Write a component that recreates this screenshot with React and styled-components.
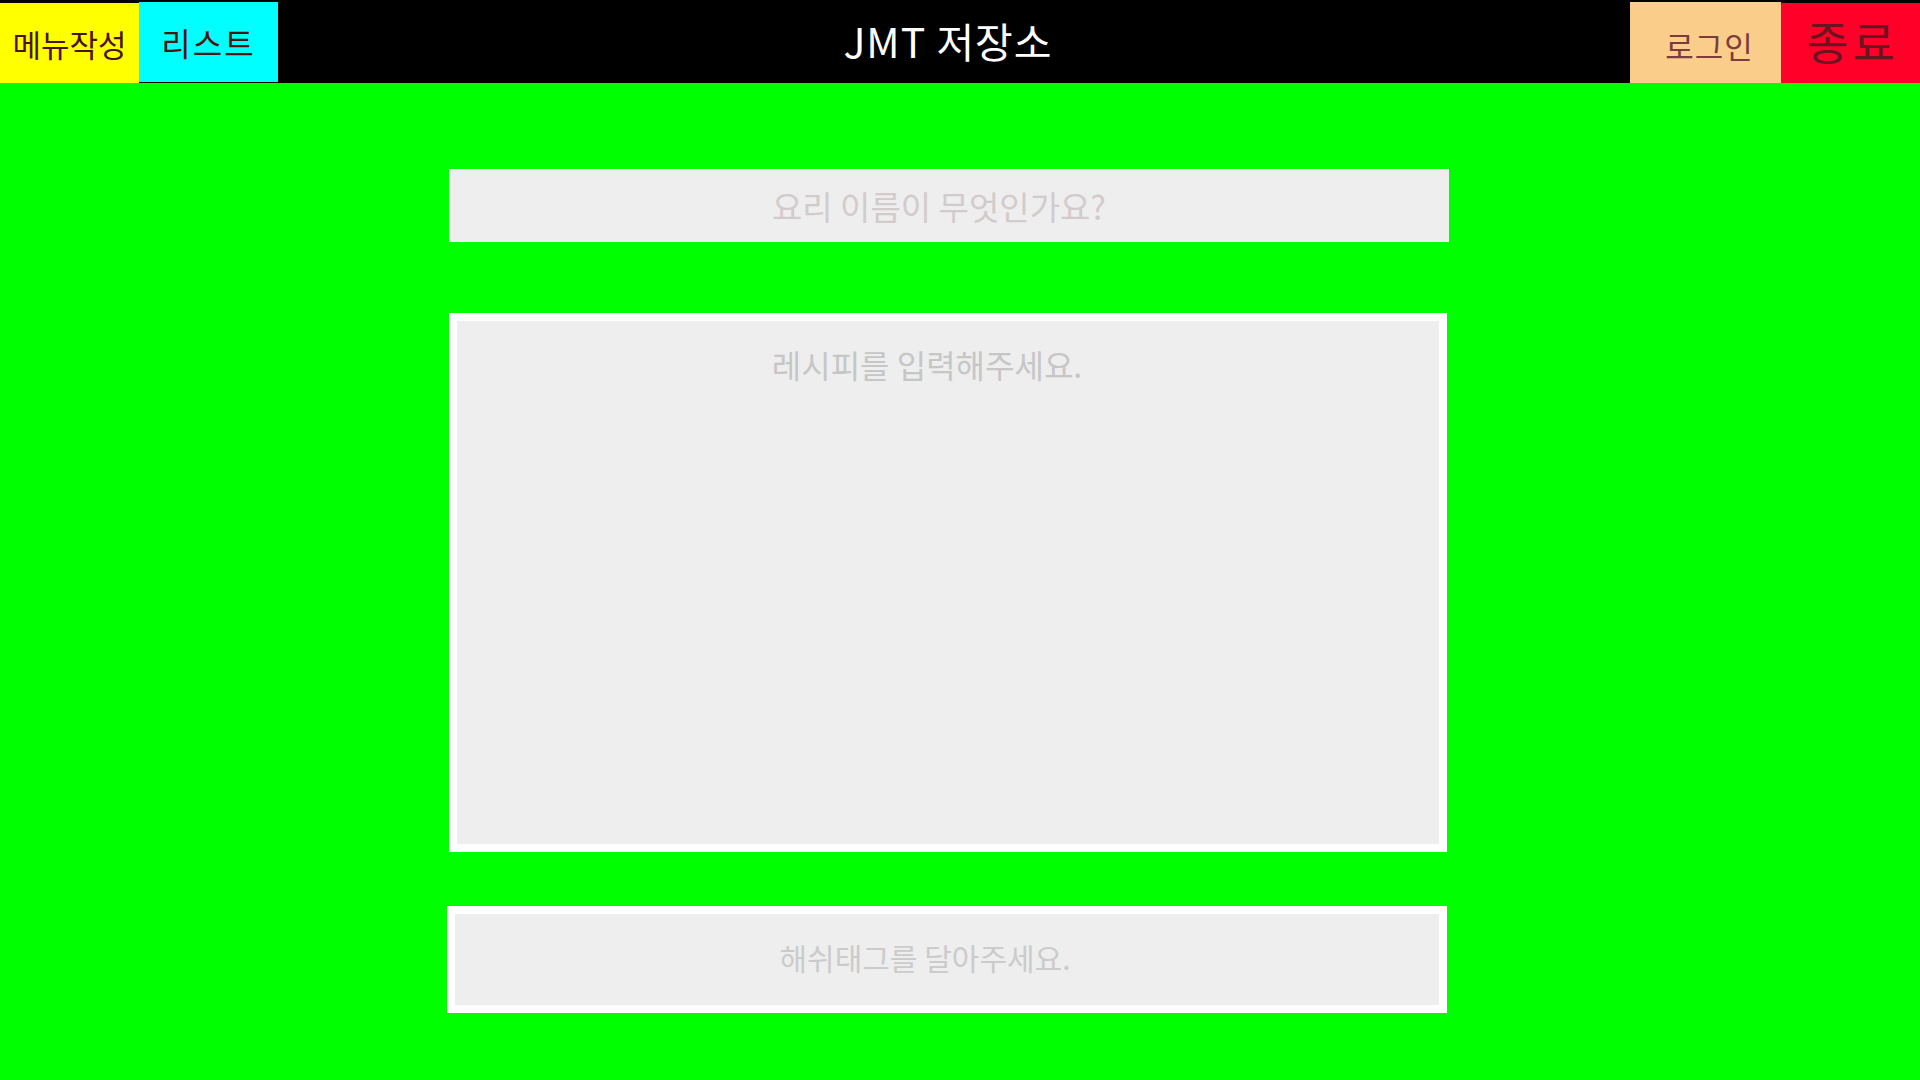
import React from 'react'
import styled, { createGlobalStyle } from 'styled-components'

const GlobalStyle = createGlobalStyle`
  html, body {
    margin: 0;
    padding: 0;
    background-color: #00ff00;
    font-family: "Noto Sans CJK KR", "Noto Sans", sans-serif;
  }
  #root {
    min-height: 100vh;
  }
`;

const Page = styled.div`
  display: flex;
  flex-direction: column;
  min-height: 100vh;
  background-color: #00ff00;
`;

const Header = styled.header`
  display: flex;
  align-items: stretch;
  height: 83px;
  background-color: black;
`;

const NavGroup = styled.div`
  display: flex;
  align-items: stretch;
`;

const NavButton = styled.button`
  display: flex;
  align-items: center;
  justify-content: center;
  width: ${props => props.width}px;
  margin-top: ${props => props.top || 3}px;
  margin-bottom: ${props => props.bottom || 0}px;
  padding: ${props => props.pad || '0'};
  border: none;
  background-color: ${props => props.bg};
  color: ${props => props.color};
  font-family: "Noto Sans CJK KR", sans-serif;
  font-size: ${props => props.size}px;
  letter-spacing: ${props => props.spacing || 0}px;
  line-height: 1;
  white-space: nowrap;
  cursor: pointer;
`;

const Title = styled.h1`
  flex: 1;
  display: flex;
  align-items: center;
  justify-content: center;
  margin: 0;
  padding: 0 12px 4px 0;
  color: white;
  font-family: "Noto Sans CJK KR", sans-serif;
  font-weight: 400;
  font-size: 41px;
  letter-spacing: 1px;
`;

const Form = styled.main`
  display: flex;
  flex-direction: column;
  align-items: center;
  padding: 86px 22px 0 0;
`;

const NameInput = styled.input`
  box-sizing: border-box;
  width: 1000px;
  height: 73px;
  border: none;
  outline: none;
  background-color: #eeeeee;
  text-align: center;
  font-family: "Noto Sans CJK KR", sans-serif;
  font-size: 33px;
  padding: 0 20px 0 0;

  &::placeholder {
    color: #d3cbcb;
  }
`;

const RecipeArea = styled.textarea`
  box-sizing: border-box;
  width: 998px;
  height: 539px;
  margin-top: 71px;
  margin-right: 2px;
  padding: 20px 42px 0 0;
  border: 8px solid white;
  outline: none;
  resize: none;
  background-color: #eeeeee;
  text-align: center;
  font-family: "Noto Sans CJK KR", sans-serif;
  font-size: 32px;

  &::placeholder {
    color: #c6c6c6;
  }
`;

const TagInput = styled.input`
  box-sizing: border-box;
  width: 1000px;
  height: 107px;
  margin-top: 54px;
  margin-right: 4px;
  padding: 0 44px 6px 0;
  border: 8px solid white;
  outline: none;
  background-color: #eeeeee;
  text-align: center;
  font-family: "Noto Sans CJK KR", sans-serif;
  font-size: 30px;

  &::placeholder {
    color: #cbcbcb;
  }
`;

export default function App() {
  return (
    <Page>
      <GlobalStyle />
      <Header>
        <NavGroup>
          <NavButton width={139} bg="#ffff00" color="#4a1414" size={31}>메뉴작성</NavButton>
          <NavButton width={139} top={2} bottom={1} bg="#00ffff" color="#4a1414" size={32} spacing={2}>리스트</NavButton>
        </NavGroup>
        <Title>JMT 저장소</Title>
        <NavGroup>
          <NavButton width={151} top={2} bg="#facd8a" color="#7a3c3c" size={31} spacing={1} pad="6px 0 0 8px">로그인</NavButton>
          <NavButton width={139} bg="#ff0029" color="#6a1420" size={46} spacing={4} pad="0 0 6px 4px">종료</NavButton>
        </NavGroup>
      </Header>
      <Form>
        <NameInput placeholder="요리 이름이 무엇인가요?" />
        <RecipeArea placeholder="레시피를 입력해주세요." />
        <TagInput placeholder="해쉬태그를 달아주세요." />
      </Form>
    </Page>
  )
}
